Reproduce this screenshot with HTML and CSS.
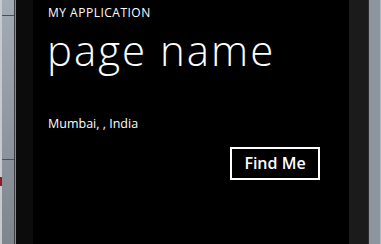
FILE: index.html
```html
<!DOCTYPE html>
<html lang="en">
<head>
    <meta charset="UTF-8">
    <title>page name</title>
    <link rel="stylesheet" href="styles.css">
</head>
<body>
    <div class="emulator">
        <div class="chrome-left">
            <div class="chrome-panel chrome-panel--top"></div>
            <div class="chrome-panel chrome-panel--mid"></div>
            <div class="chrome-panel chrome-panel--bottom"><span class="marker"></span></div>
        </div>
        <div class="bezel bezel--left"></div>
        <div class="screen">
            <div class="title-panel">
                <div class="app-title">MY APPLICATION</div>
                <div class="page-title">page name</div>
            </div>
            <div class="content-panel">
                <div class="location" id="location">Mumbai, , India</div>
                <div class="actions">
                    <button class="find-btn" type="button">Find Me</button>
                </div>
            </div>
        </div>
        <div class="bezel bezel--right"></div>
        <div class="chrome-right"></div>
    </div>
</body>
</html>
```

FILE: styles.css
```css
html, body {
    height: 100%;
}
body {
    margin: 0;
    background: #000;
    font-family: "Open Sans", "Noto Sans", sans-serif;
    color: #fff;
    overflow: hidden;
}
.emulator {
    display: flex;
    height: 244px;
}

/* Barra lateral del emulador */
.chrome-left {
    width: 12px;
    display: flex;
    flex-direction: column;
    border-left: 2px solid #c6cacf;
    border-right: 1px solid #3b3e42;
    box-shadow: 1px 0 0 #868c93;
    margin-right: 1px;
    background: linear-gradient(#a3abb5, #7f858d);
}
.chrome-panel--top {
    height: 15px;
    border-bottom: 1px solid #4a4f55;
}
.chrome-panel--mid {
    height: 143px;
    border-bottom: 1px solid #4a4f55;
}
.chrome-panel--bottom {
    flex: 1;
    position: relative;
}
.marker {
    position: absolute;
    left: -2px;
    top: 17px;
    width: 2px;
    height: 9px;
    background: #8a1f1f;
}
.bezel--left {
    width: 17px;
    background: #0c0c0c;
}
.bezel--right {
    width: 19px;
    background: #1b1b1b;
    border-right: 1px solid #2a2c2e;
}
.chrome-right {
    flex: 1;
    background: #8d959f;
    border-right: 1px solid #b4bac1;
}

/* Pantalla */
.screen {
    width: 316px;
    background: #000;
    padding-left: 15px;
    box-sizing: border-box;
}
.title-panel {
    padding-top: 5px;
}
.app-title {
    font-size: 12px;
    line-height: 16px;
    letter-spacing: 0.5px;
}
.page-title {
    margin-top: 4px;
    font-size: 42px;
    font-weight: 300;
    line-height: 50px;
    letter-spacing: 2px;
    margin-left: -1px;
}
.content-panel {
    padding-top: 41px;
    padding-right: 29px;
}
.location {
    font-size: 12.5px;
    line-height: 16px;
}
.actions {
    display: flex;
    justify-content: flex-end;
    margin-top: 15px;
}
.find-btn {
    width: 90px;
    height: 33px;
    background: transparent;
    border: 2px solid #fff;
    color: #fff;
    font-family: "Open Sans", "Noto Sans", sans-serif;
    font-size: 16px;
    font-weight: 600;
    padding: 0 0 1px;
}
```
